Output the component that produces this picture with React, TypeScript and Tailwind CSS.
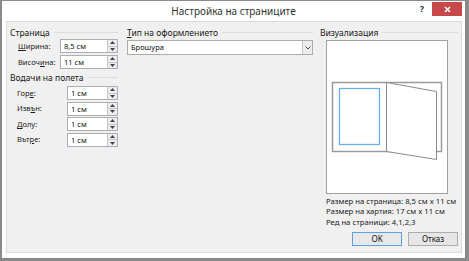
import { Fragment } from "react";

const font = { fontFamily: '"Noto Sans", "Liberation Sans", sans-serif' };

function Spinner() {
  return (
    <div className="flex h-full w-[10px] flex-col border-l border-[#c8c8c8] bg-[#ececec]">
      <div className="flex flex-1 items-center justify-center border-b border-[#c8c8c8]">
        <svg width="5" height="3" viewBox="0 0 5 3">
          <path d="M0 3 L2.5 0 L5 3 Z" fill="#444" />
        </svg>
      </div>
      <div className="flex flex-1 items-center justify-center">
        <svg width="5" height="3" viewBox="0 0 5 3">
          <path d="M0 0 L2.5 3 L5 0 Z" fill="#444" />
        </svg>
      </div>
    </div>
  );
}

function NumberBox({ value }: { value: string }) {
  return (
    <div className="flex h-[14px] flex-1 items-stretch border border-[#abadb3] bg-white">
      <span className="flex-1 pl-[3px] text-[7.5px] leading-[12px] text-[#111]">{value}</span>
      <Spinner />
    </div>
  );
}

function Header({ label, under }: { label: string; under?: number }) {
  return (
    <div className="flex h-[11px] items-center gap-[4px]">
      <span className="whitespace-nowrap text-[8.5px] leading-[11px] text-[#1a1a1a]">
        {under === undefined ? (
          label
        ) : (
          <Fragment>
            {label.slice(0, under)}
            <span className="underline">{label[under]}</span>
            {label.slice(under + 1)}
          </Fragment>
        )}
      </span>
      <div className="h-px flex-1 bg-[#dcdcdc]" />
    </div>
  );
}

function Field({ label, under, value, labelW }: { label: string; under: number; value: string; labelW: string }) {
  return (
    <div className="flex h-[14px] items-center">
      <span className={`${labelW} whitespace-nowrap text-[7.5px] leading-[11px] text-[#1a1a1a]`}>
        {label.slice(0, under)}
        <span className="underline">{label[under]}</span>
        {label.slice(under + 1)}:
      </span>
      <NumberBox value={value} />
    </div>
  );
}

function Preview() {
  return (
    <div className="mt-[2px] ml-[6px] h-[154px] w-[122px] border border-[#a0a0a0] bg-white">
      <svg width="120" height="152" viewBox="1 1 120 152">
        <rect x="6.5" y="42.5" width="109" height="69" fill="white" stroke="#9a9a9a" strokeWidth="1.5" />
        <rect x="13.5" y="48.5" width="40" height="56" fill="white" stroke="#6aaef2" strokeWidth="1.3" />
        <path d="M60.5 42.5 L110.5 51.5 L110.5 119.5 L60.5 111.5 Z" fill="white" stroke="#8a8a8a" strokeWidth="1" />
        <line x1="60.5" y1="42.5" x2="60.5" y2="111.5" stroke="#8a8a8a" strokeWidth="1" />
      </svg>
    </div>
  );
}

export default function App() {
  return (
    <div
      className="flex h-[261px] w-[469px] flex-col border-t border-r-4 border-b-[3px] border-l-2 border-[#8a8a8a] bg-white"
      style={font}
    >
      <div className="grid h-[20px] grid-cols-[1fr_auto_1fr]">
        <div />
        <div className="flex items-center text-[10px] text-[#333]">Настройка на страниците</div>
        <div className="flex items-start justify-end">
          <span className="mt-[2px] mr-[8px] text-[9px] font-bold leading-[12px] text-[#333]">?</span>
          <div className="mt-[1px] mr-[3px] flex h-[14px] w-[30px] items-center justify-center bg-[#c7484a]">
            <svg width="7" height="7" viewBox="0 0 7 7">
              <path d="M1 1 L6 6 M6 1 L1 6" stroke="white" strokeWidth="1.5" />
            </svg>
          </div>
        </div>
      </div>

      <div className="mr-[3px] mb-[5px] ml-[4px] flex flex-1 border border-[#dadada] bg-[#f0f0f0] pt-[5px] pl-[3px]">
        <div className="flex w-[108px] flex-col">
          <Header label="Страница" />
          <div className="mt-[1px] flex flex-col gap-[2px] pl-[8px]">
            <Field label="Ширина" under={0} value="8,5 см" labelW="w-[42px]" />
            <Field label="Височина" under={5} value="11 см" labelW="w-[42px]" />
          </div>
          <div className="mt-[3px]">
            <Header label="Водачи на полета" />
          </div>
          <div className="mt-[3px] flex flex-col gap-[1.6px] pl-[7px]">
            <Field label="Горе" under={3} value="1 см" labelW="w-[50px]" />
            <Field label="Извън" under={3} value="1 см" labelW="w-[50px]" />
            <Field label="Долу" under={0} value="1 см" labelW="w-[50px]" />
            <Field label="Вътре" under={3} value="1 см" labelW="w-[50px]" />
          </div>
        </div>

        <div className="ml-[9px] flex w-[186px] flex-col">
          <Header label="Тип на оформлението" under={0} />
          <div className="mt-[2px] flex h-[15px] items-stretch border border-[#acacac] bg-white">
            <span className="flex-1 pl-[3px] text-[7.5px] leading-[13px] text-[#111]">Брошура</span>
            <div className="flex w-[10px] items-center justify-center border-l border-[#c8c8c8] bg-[#ececec]">
              <svg width="6" height="4" viewBox="0 0 6 4">
                <path d="M0.5 0.5 L3 3 L5.5 0.5" stroke="#444" strokeWidth="1" fill="none" />
              </svg>
            </div>
          </div>
        </div>

        <div className="ml-[7px] flex w-[138px] flex-col">
          <Header label="Визуализация" />
          <Preview />
          <div className="mt-[2px] ml-[6px] flex flex-col whitespace-nowrap text-[7.7px] leading-[10.4px] text-[#1a1a1a]">
            <span>Размер на страница: 8,5 см x 11 см</span>
            <span>Размер на хартия: 17 см x 11 см</span>
            <span>Ред на страници: 4,1,2,3</span>
          </div>
          <div className="mt-[5px] flex justify-end gap-[6px]">
            <button className="flex h-[14px] w-[50px] items-center justify-center border border-[#5ca0e6] bg-[#e8e8e8] text-[8px] text-[#111]">
              OK
            </button>
            <button className="flex h-[14px] w-[50px] items-center justify-center border border-[#acacac] bg-[#e6e6e6] text-[8px] text-[#111]">
              Отказ
            </button>
          </div>
        </div>
      </div>
    </div>
  );
}
